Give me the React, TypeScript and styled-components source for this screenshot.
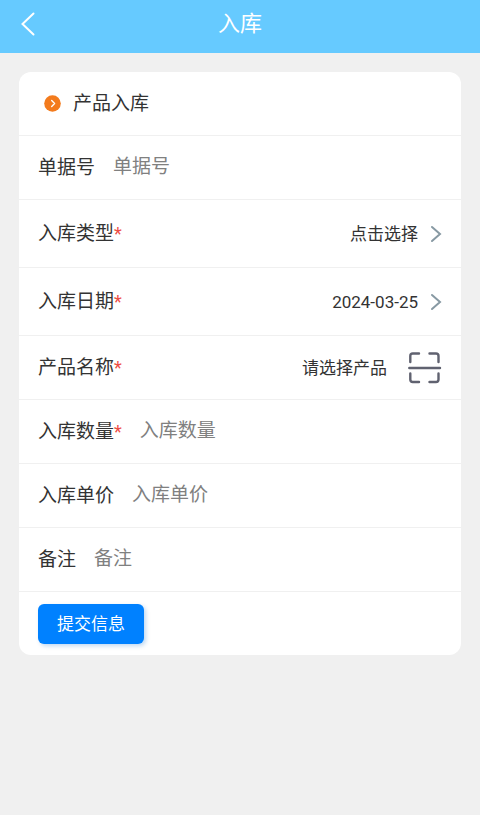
import React from "react";
import styled, { createGlobalStyle } from "styled-components";

const GlobalStyle = createGlobalStyle`
  *, *::before, *::after { box-sizing: border-box; }
  body {
    margin: 0;
    background: #f0f0f0;
    color: #333;
    font-family: Roboto, "Noto Sans CJK SC", sans-serif;
  }
  button, input { font: inherit; color: inherit; }
`;

const Header = styled.header`
  display: grid;
  grid-template-columns: 56px 1fr 56px;
  align-items: center;
  height: 53px;
  padding-bottom: 6px;
  background: #66caff;
  color: #fff;
`;

const BackButton = styled.button`
  display: flex;
  align-items: center;
  justify-content: center;
  height: 47px;
  padding: 0;
  border: 0;
  background: none;
`;

const Title = styled.h1`
  margin: 0;
  font-size: 22px;
  font-weight: 400;
  line-height: 32px;
  text-align: center;
`;

const Card = styled.form`
  margin: 19px;
  border-radius: 12px;
  background: #fff;
`;

const Row = styled.div<{ $tall?: boolean }>`
  display: flex;
  align-items: center;
  min-height: ${(p) => (p.$tall ? 68 : 64)}px;
  padding: 0 19px;
  border-bottom: 1px solid #f0f0f0;
  font-size: 19px;
  line-height: 28px;

  &:last-child {
    min-height: 63px;
    border-bottom: 0;
  }
`;

const SectionTitle = styled.h2`
  display: flex;
  align-items: center;
  gap: 12px;
  margin: 0;
  padding-left: 6px;
  font-size: 19px;
  font-weight: 400;
`;

const Label = styled.label`
  flex: none;
`;

const Required = styled.span`
  color: #ee4d45;
  font-size: 18px;
`;

const TextInput = styled.input`
  flex: 1;
  min-width: 0;
  height: 28px;
  margin-left: 18px;
  padding: 0 0 2px;
  border: 0;
  outline: 0;
  background: none;

  &::placeholder {
    color: #808080;
    opacity: 1;
  }
`;

const Picker = styled.button`
  display: flex;
  flex: 1;
  align-items: center;
  justify-content: flex-end;
  gap: 12px;
  padding: 0;
  border: 0;
  background: none;
  font-size: 17px;
  line-height: 28px;
`;

const ScanButton = styled.button`
  display: flex;
  margin-left: 21px;
  padding: 0;
  border: 0;
  background: none;
`;

const SubmitButton = styled.button`
  height: 40px;
  padding: 0 19px;
  border: 0;
  border-radius: 6px;
  background: #0081ff;
  box-shadow: 2px 2px 4px rgba(0, 102, 204, 0.25);
  color: #fff;
  font-size: 17px;
  line-height: 38px;
`;

const BackIcon = () => (
  <svg width="14" height="24" viewBox="0 0 14 24" fill="none" stroke="#fff" strokeWidth="2" strokeLinecap="round" aria-hidden="true">
    <path d="M12.5 1.5 1.5 12l11 10.5" />
  </svg>
);

const BulletIcon = () => (
  <svg width="17" height="17" viewBox="0 0 17 17" fill="none" aria-hidden="true">
    <circle cx="8.5" cy="8.5" r="8.3" fill="#f37b1d" />
    <path d="m7.7 5.6 2.9 2.9-2.9 2.9" stroke="#fff" strokeWidth="1.4" strokeLinecap="round" strokeLinejoin="round" />
  </svg>
);

const ArrowIcon = () => (
  <svg width="12" height="18" viewBox="0 0 12 18" fill="none" stroke="#8799a3" strokeWidth="2" strokeLinecap="round" aria-hidden="true">
    <path d="m2 2 8 7-8 7" />
  </svg>
);

const ScanIcon = () => (
  <svg width="34" height="32" viewBox="0 0 34 32" fill="none" stroke="#606270" strokeWidth="2.4" strokeLinecap="round" aria-hidden="true">
    <path d="M2.3 10V4Q2.3 1.5 4.8 1.5H11M21.500 1.5H28Q30.500 1.5 30.500 4V10M2.3 21.500V27.500Q2.3 30 4.8 30H11M21.500 30H28Q30.500 30 30.500 27.500V21.500M1.300 16H32" />
  </svg>
);

interface FieldProps {
  id: string;
  label: string;
  required?: boolean;
}

const FieldLabel = ({ id, label, required }: FieldProps) => (
  <Label htmlFor={id}>
    {label}
    {required && <Required>*</Required>}
  </Label>
);

const InputRow = (props: FieldProps) => (
  <Row>
    <FieldLabel {...props} />
    <TextInput id={props.id} placeholder={props.label} required={props.required} />
  </Row>
);

const PickerRow = ({ value, ...field }: FieldProps & { value: string }) => (
  <Row $tall>
    <FieldLabel {...field} />
    <Picker id={field.id} type="button">
      {value}
      <ArrowIcon />
    </Picker>
  </Row>
);

export default function App() {
  return (
    <>
      <GlobalStyle />
      <Header>
        <BackButton type="button" aria-label="返回">
          <BackIcon />
        </BackButton>
        <Title>入库</Title>
      </Header>
      <main>
        <Card onSubmit={(e) => e.preventDefault()}>
          <Row>
            <SectionTitle>
              <BulletIcon />
              产品入库
            </SectionTitle>
          </Row>
          <InputRow id="number" label="单据号" />
          <PickerRow id="type" label="入库类型" required value="点击选择" />
          <PickerRow id="date" label="入库日期" required value="2024-03-25" />
          <Row>
            <FieldLabel id="product" label="产品名称" required />
            <Picker id="product" type="button">请选择产品</Picker>
            <ScanButton type="button" aria-label="扫码">
              <ScanIcon />
            </ScanButton>
          </Row>
          <InputRow id="quantity" label="入库数量" required />
          <InputRow id="price" label="入库单价" />
          <InputRow id="remark" label="备注" />
          <Row>
            <SubmitButton type="submit">提交信息</SubmitButton>
          </Row>
        </Card>
      </main>
    </>
  );
}
